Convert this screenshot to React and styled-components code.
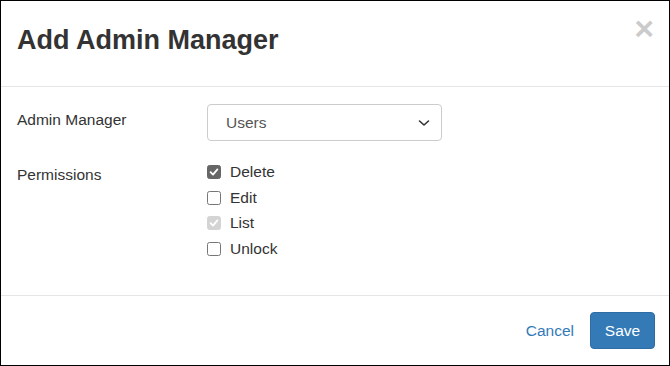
import React from "react";
import styled, { createGlobalStyle } from "styled-components";

const Global = createGlobalStyle`
  html, body { margin: 0; padding: 0; background: #fff; }
  * { box-sizing: border-box; }
`;

const Modal = styled.div`
  width: 670px;
  height: 366px;
  border: 1px solid #000;
  display: flex;
  flex-direction: column;
  font-family: "Liberation Sans", Arial, sans-serif;
  color: #333;
  background: #fff;
`;

const Header = styled.div`
  height: 86px;
  border-bottom: 1px solid #e5e5e5;
  padding: 24px 15px 0 16px;
  display: flex;
  justify-content: space-between;
  align-items: flex-start;
`;

const Title = styled.h4`
  margin: 0;
  font-size: 27px;
  line-height: 30px;
  font-weight: 700;
  color: #333;
`;

const Close = styled.button`
  border: 0;
  background: none;
  padding: 0;
  margin-top: -13px;
  font-family: "Liberation Sans", Arial, sans-serif;
  font-size: 34px;
  font-weight: 700;
  line-height: 32px;
  color: #000;
  opacity: 0.2;
  cursor: pointer;
`;

const Body = styled.div`
  flex: 1;
  padding: 17px 16px;
  display: grid;
  grid-template-columns: 190px 235px;
  row-gap: 18px;
  align-content: start;
`;

const Label = styled.div`
  font-size: 15.5px;
  line-height: 20px;
  padding-top: ${(p) => p.$pt || 6}px;
  color: #333;
`;

const SelectBox = styled.div`
  height: 37px;
  border: 1px solid #ccc;
  border-radius: 4px;
  padding: 0 11px 0 18px;
  display: flex;
  align-items: center;
  justify-content: space-between;
  font-size: 15.5px;
  color: #555;
`;

const CheckList = styled.div`
  display: flex;
  flex-direction: column;
`;

const CheckRow = styled.label`
  height: 25.7px;
  display: flex;
  align-items: center;
  gap: 9px;
  font-size: 15.5px;
  color: #333;
`;

const Box = styled.span`
  width: 14px;
  height: 14px;
  border-radius: 2.5px;
  display: inline-flex;
  align-items: center;
  justify-content: center;
  border: 1px solid
    ${(p) => (p.$disabled ? "#d4d4d4" : p.$checked ? "#666" : "#767676")};
  background: ${(p) =>
    p.$checked ? (p.$disabled ? "#d4d4d4" : "#666") : "#fff"};
`;

const Footer = styled.div`
  height: 70px;
  border-top: 1px solid #e5e5e5;
  padding: 0 14px 0 16px;
  display: flex;
  align-items: center;
  justify-content: flex-end;
  gap: 16px;
`;

const CancelLink = styled.a`
  font-size: 15.5px;
  color: #337ab7;
  text-decoration: none;
  cursor: pointer;
`;

const SaveButton = styled.button`
  width: 65px;
  height: 37px;
  border: 1px solid #2e6da4;
  border-radius: 4px;
  background: #337ab7;
  color: #fff;
  font-family: "Liberation Sans", Arial, sans-serif;
  font-size: 15.5px;
  cursor: pointer;
`;

const Check = () => (
  <svg width="10" height="10" viewBox="0 0 10 10">
    <path
      d="M1.6 5.2 L4 7.6 L8.4 2.4"
      fill="none"
      stroke="#fff"
      strokeWidth="1.8"
      strokeLinecap="round"
      strokeLinejoin="round"
    />
  </svg>
);

const Chevron = () => (
  <svg width="12" height="8" viewBox="0 0 12 8">
    <path
      d="M1.5 2 L6 6 L10.5 2"
      fill="none"
      stroke="#333"
      strokeWidth="1.6"
      strokeLinecap="round"
      strokeLinejoin="round"
    />
  </svg>
);

const perms = [
  { name: "Delete", checked: true },
  { name: "Edit", checked: false },
  { name: "List", checked: true, disabled: true },
  { name: "Unlock", checked: false },
];

export default function App() {
  return (
    <>
      <Global />
      <Modal>
        <Header>
          <Title>Add Admin Manager</Title>
          <Close aria-label="Close">×</Close>
        </Header>
        <Body>
          <Label $pt={6}>Admin Manager</Label>
          <SelectBox>
            <span>Users</span>
            <Chevron />
          </SelectBox>
          <Label $pt={6}>Permissions</Label>
          <CheckList>
            {perms.map((p) => (
              <CheckRow key={p.name}>
                <Box $checked={p.checked} $disabled={p.disabled}>
                  {p.checked && <Check />}
                </Box>
                {p.name}
              </CheckRow>
            ))}
          </CheckList>
        </Body>
        <Footer>
          <CancelLink>Cancel</CancelLink>
          <SaveButton>Save</SaveButton>
        </Footer>
      </Modal>
    </>
  );
}
